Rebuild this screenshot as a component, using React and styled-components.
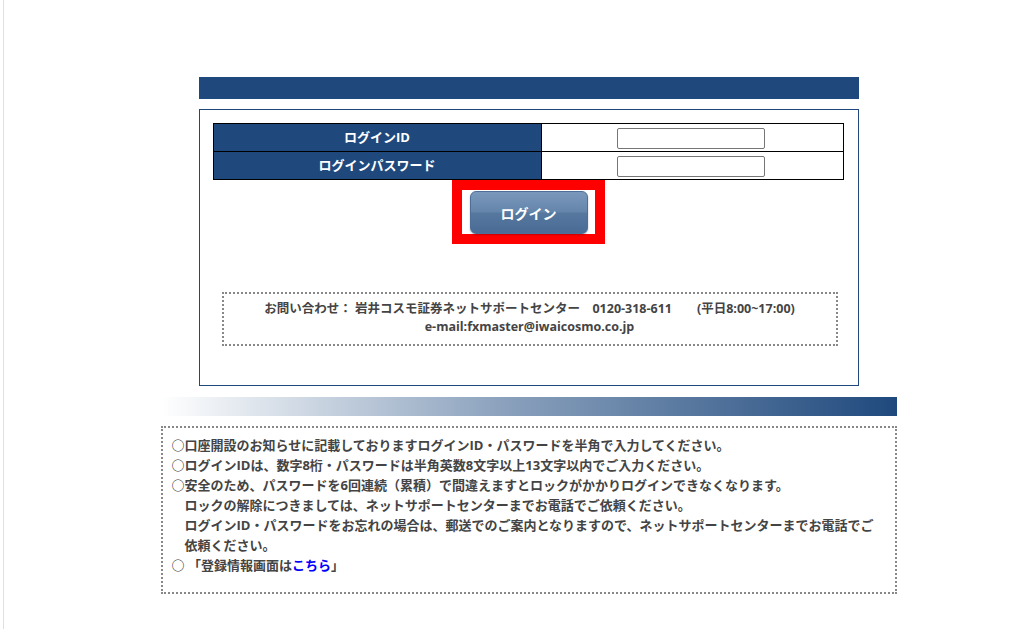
import React from "react"
import styled, { createGlobalStyle } from "styled-components"

const GlobalStyle = createGlobalStyle`
  html, body {
    margin: 0;
    padding: 0;
    background: #fff;
    overflow: hidden;
  }
  body {
    font-family: "Open Sans", "Noto Sans CJK JP", sans-serif;
    color: #333;
  }
`

const NAVY = "#1f497d"

const App = () => {
  return (
    <>
      <GlobalStyle />
      <Page>
        <TopBar />
        <Panel>
          <LoginTable>
            <tbody>
              <tr>
                <th>ログインID</th>
                <td>
                  <Field type="text" />
                </td>
              </tr>
              <tr>
                <th>ログインパスワード</th>
                <td>
                  <Field type="password" />
                </td>
              </tr>
            </tbody>
          </LoginTable>
          <ButtonRow>
            <RedFrame>
              <LoginButton>ログイン</LoginButton>
            </RedFrame>
          </ButtonRow>
          <Contact>
            <p>
              お問い合わせ： 岩井コスモ証券ネットサポートセンター　0120-318-611　　(平日8:00~17:00)
            </p>
            <p>e-mail:fxmaster@iwaicosmo.co.jp</p>
          </Contact>
        </Panel>
        <FadeBar />
        <Notes>
          <li>○口座開設のお知らせに記載しておりますログインID・パスワードを半角で入力してください。</li>
          <li>○ログインIDは、数字8桁・パスワードは半角英数8文字以上13文字以内でご入力ください。</li>
          <li>○安全のため、パスワードを6回連続（累積）で間違えますとロックがかかりログインできなくなります。</li>
          <li className="indent">ロックの解除につきましては、ネットサポートセンターまでお電話でご依頼ください。</li>
          <li className="indent">
            ログインID・パスワードをお忘れの場合は、郵送でのご案内となりますので、ネットサポートセンターまでお電話でご依頼ください。
          </li>
          <li>
            ○ 「登録情報画面は<a href="#">こちら</a>」
          </li>
        </Notes>
      </Page>
    </>
  )
}

export default App

const Page = styled.div`
  margin-left: 3px;
  width: 1050px;
  min-height: 629px;
  border-left: 1px solid #e0e0e0;
  padding-top: 77px;
  box-sizing: border-box;
`

const TopBar = styled.div`
  width: 660px;
  height: 22px;
  margin: 0 auto 10px;
  background: ${NAVY};
`

const Panel = styled.div`
  width: 660px;
  height: 277px;
  margin: 0 auto;
  box-sizing: border-box;
  border: 1px solid ${NAVY};
  padding: 13px 14px 0 13px;
`

const LoginTable = styled.table`
  width: 100%;
  border-collapse: collapse;

  th,
  td {
    border: 1px solid #000;
    height: 27px;
    padding: 0;
  }

  th {
    width: 327px;
    height: 25px;
    padding-bottom: 2px;
    background: ${NAVY};
    color: #fff;
    font-size: 13px;
    font-weight: 700;
  }

  td {
    text-align: center;
    background: #fff;
  }
`

const Field = styled.input`
  width: 148px;
  height: 21px;
  box-sizing: border-box;
  border: 1px solid #767676;
  border-radius: 2px;
  margin: 0 0 0 -3px;
  vertical-align: middle;
`

const ButtonRow = styled.div`
  display: flex;
  justify-content: center;
`

const RedFrame = styled.div`
  border: 10px solid #ff0000;
  padding: 1px 7px 0 8px;
  background: #fff;
`

const LoginButton = styled.button`
  width: 118px;
  height: 43px;
  border: 1px solid #4f6f96;
  border-radius: 6px;
  color: #fff;
  font-family: "Open Sans", "Noto Sans CJK JP", sans-serif;
  font-size: 14px;
  font-weight: 700;
  background: linear-gradient(
    to bottom,
    #7a98bb 0%,
    #6585ab 48%,
    #56789f 52%,
    #4a6b94 100%
  );
  box-shadow: 0 1px 2px rgba(0, 0, 0, 0.25);
  display: block;
  cursor: pointer;
`

const Contact = styled.div`
  margin: 48px 6px 0 9px;
  height: 54px;
  box-sizing: border-box;
  border: 2px dotted #888;
  padding-top: 6px;
  text-align: center;
  font-size: 12.5px;
  font-weight: 700;
  color: #444;

  p {
    margin: 0;
    line-height: 18px;
  }
`

const FadeBar = styled.div`
  width: 736px;
  height: 19px;
  margin: 11px auto 10px;
  background: linear-gradient(to right, #ffffff 0%, #8ea4bf 45%, ${NAVY} 100%);
`

const Notes = styled.ul`
  width: 736px;
  height: 168px;
  margin: 0 auto;
  box-sizing: border-box;
  border: 2px dotted #888;
  list-style: none;
  padding: 7px 18px 0 9px;
  font-size: 13px;
  font-weight: 700;
  line-height: 20px;
  color: #444;

  li.indent {
    padding-left: 13px;
  }

  a {
    color: #0000ff;
    text-decoration: none;
  }
`
